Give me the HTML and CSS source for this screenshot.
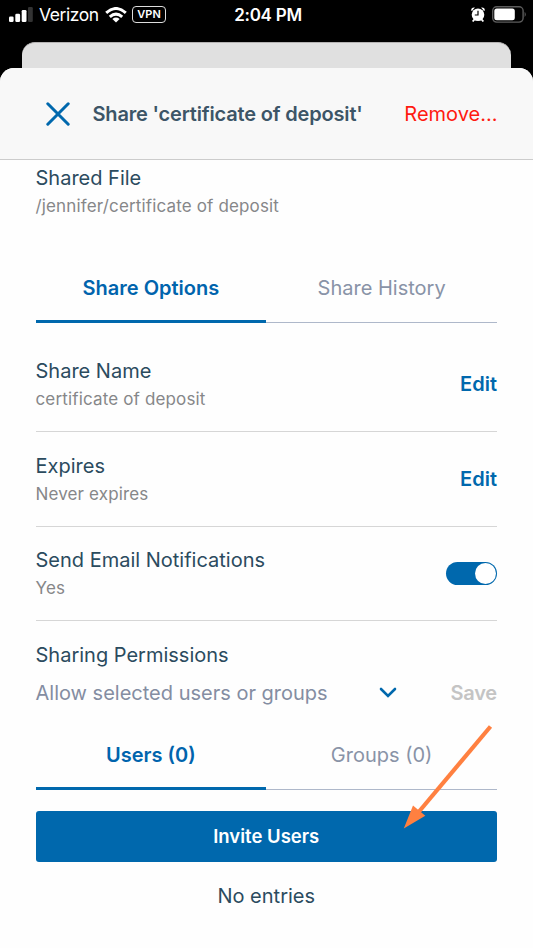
FILE: index.html
```html
<!DOCTYPE html>
<html lang="en">
<head>
<meta charset="utf-8">
<title>Share</title>
<link rel="stylesheet" href="styles.css">
</head>
<body>
<div class="statusbar">
  <div class="status-left">
    <svg class="signal" width="25" height="17" viewBox="0 0 25 17"><g fill="#fff"><rect x="0" y="10.5" width="4.6" height="5.5" rx="1.3"/><rect x="6.3" y="7.8" width="4.8" height="8.2" rx="1.3"/><rect x="12.7" y="4" width="4.8" height="12" rx="1.3"/></g><rect x="19" y="1" width="4.8" height="15" rx="1.3" fill="#333"/></svg>
    <span class="carrier">Verizon</span>
    <svg class="wifi" width="22" height="16" viewBox="0 0 22 16"><g fill="none" stroke="#fff" stroke-width="3"><path d="M1.2 5.8Q11-2.8 20.8 5.8"/><path d="M4.8 9.8Q11 4.4 17.2 9.8"/></g><path d="M7.4 12Q11 9.2 14.6 12L11 15.6Z" fill="#fff"/></svg>
    <span class="vpn">VPN</span>
  </div>
  <span class="clock">2:04 PM</span>
  <div class="status-right">
    <svg width="14" height="15" viewBox="0 0 14 15"><g fill="#fff"><circle cx="7" cy="7.8" r="6.3"/><path d="M.2 3.5Q0 .2 3.9.6L.9 4ZM13.8 3.5Q14 .2 10.1.6L13.1 4Z"/><path d="M2.5 12L4 13.3 2.3 15 1 14ZM11.5 12L10 13.3 11.7 15 13 14Z"/></g><path d="M7 3.8V8H3.8" fill="none" stroke="#000" stroke-width="1.2"/></svg>
    <svg width="35" height="17" viewBox="0 0 35 17"><rect x=".7" y=".7" width="30.4" height="15.4" rx="4" fill="none" stroke="#5c5c5c" stroke-width="1.4"/><rect x="2.3" y="2.5" width="20.5" height="11.7" rx="2.5" fill="#fff"/><path d="M32.6 5.7Q35 8.4 32.6 11Z" fill="#5c5c5c"/></svg>
  </div>
</div>
<div class="back-sheet"></div>
<main class="sheet">
  <header class="header">
    <svg class="close" width="24" height="24" viewBox="0 0 24 24"><path d="M1.8 1.8L22.2 22.2M22.2 1.8L1.8 22.2" stroke="#0068ad" stroke-width="3" stroke-linecap="round"/></svg>
    <h1 class="title">Share 'certificate of deposit'</h1>
    <span class="remove">Remove...</span>
  </header>
  <div class="content">
    <section class="file">
      <div class="label">Shared File</div>
      <div class="sub">/jennifer/certificate of deposit</div>
    </section>
    <nav class="tabs">
      <div class="tab active">Share Options</div>
      <div class="tab">Share History</div>
    </nav>
    <div class="rows">
      <div class="row">
        <div><div class="label">Share Name</div><div class="sub">certificate of deposit</div></div>
        <span class="edit">Edit</span>
      </div>
      <div class="row">
        <div><div class="label">Expires</div><div class="sub">Never expires</div></div>
        <span class="edit">Edit</span>
      </div>
      <div class="row">
        <div><div class="label">Send Email Notifications</div><div class="sub">Yes</div></div>
        <span class="toggle"><span class="knob"></span></span>
      </div>
    </div>
    <section class="permissions">
      <div class="label">Sharing Permissions</div>
      <div class="select-row">
        <span class="select">Allow selected users or groups</span>
        <svg class="chevron" width="18" height="12" viewBox="0 0 18 12"><path d="M2 2L9 9L16 2" fill="none" stroke="#0068ad" stroke-width="2.6" stroke-linecap="round"/></svg>
        <span class="save">Save</span>
      </div>
    </section>
    <nav class="tabs lower">
      <div class="tab active">Users (0)</div>
      <div class="tab">Groups (0)</div>
    </nav>
    <div class="invite">Invite Users</div>
    <div class="empty">No entries</div>
  </div>
  <svg class="arrow" width="94" height="108" viewBox="400 724 94 108"><path d="M490.5 726.5L417 814" stroke="#ff8040" stroke-width="4.2"/><path d="M403.8 828.5L413 805.5L425.3 815.8Z" fill="#ff8040"/></svg>
</main>
</body>
</html>
```
FILE: styles.css
```css
* { box-sizing: border-box; }
body {
  margin: 0;
  width: 533px;
  height: 948px;
  overflow: hidden;
  background: #000;
  color: #2b4b5e;
  font-family: Inter, "Liberation Sans", sans-serif;
  font-size: 20px;
  display: flex;
  flex-direction: column;
}
h1 { margin: 0; }
span, .label, .sub { white-space: nowrap; }

.statusbar {
  height: 42px;
  flex: none;
  display: grid;
  grid-template-columns: 1fr auto 1fr;
  align-items: start;
  padding: 0 6px 0 9px;
  color: #fff;
}
.status-left, .status-right { display: flex; align-items: center; height: 29px; }
.status-right { justify-content: flex-end; gap: 7px; height: 28px; }
.carrier { margin-left: 5px; font-size: 17.5px; letter-spacing: -0.45px; }
.wifi { margin-left: 6px; }
.vpn {
  margin-left: 5.5px;
  width: 34px;
  height: 17px;
  border: 1.5px solid #ddd;
  border-radius: 4px;
  font-size: 11px;
  font-weight: 600;
  line-height: 15px;
  text-align: center;
}
.clock { font-size: 17px; font-weight: 600; line-height: 30px; letter-spacing: -0.25px; }

.back-sheet {
  flex: none;
  height: 46px;
  margin: 0 22px -20px;
  background: #e0e0e0;
  border-top: 1px solid #b5b3b3;
  border-radius: 13px 13px 0 0;
}
.sheet {
  flex: 1;
  position: relative;
  background: #fefefe;
  border-radius: 14px 14px 0 0;
}
.header {
  height: 92px;
  padding: 0 36px 0 46px;
  display: flex;
  align-items: center;
  background: #f8f8f8;
  border-bottom: 1px solid #ccc;
  border-radius: 14px 14px 0 0;
}
.title {
  margin-left: 22.5px;
  font-size: 20px;
  font-weight: 600;
  letter-spacing: -0.17px;
  color: #3c5567;
  white-space: nowrap;
}
.remove { margin-left: auto; margin-right: -0.5px; color: #ff1a10; }

.content { padding: 4px 36px 0 35.5px; }
.label { line-height: 28px; }
.sub { font-size: 17px; line-height: 28px; letter-spacing: 0.15px; color: #868789; }
.tabs { display: flex; margin-top: 34px; }
.tab {
  flex: 1;
  height: 69px;
  line-height: 68px;
  text-align: center;
  color: #8993a7;
  border-bottom: 1px solid #aeb8ca;
}
.tab.active { color: #0064ad; font-weight: 600; border-bottom: 3px solid #0068ad; }
.rows { padding-top: 14.5px; }
.row {
  height: 94.5px;
  padding-top: 19.5px;
  display: flex;
  justify-content: space-between;
  border-bottom: 1px solid #d6d6d6;
}
.edit { line-height: 55.5px; font-weight: 600; color: #0068ad; }
.toggle {
  width: 51px;
  height: 23px;
  margin-top: 16px;
  padding: 1px;
  display: flex;
  justify-content: flex-end;
  border-radius: 12px;
  background: #0068ad;
}
.knob { width: 21px; height: 21px; border-radius: 50%; background: #fff; }
.permissions { padding-top: 19.5px; }
.select-row { display: flex; align-items: center; height: 28px; margin-top: 10px; }
.select { color: #848da2; width: 343px; }
.save { margin-left: auto; font-weight: 600; color: #c4c4c4; letter-spacing: -0.2px; }
.lower { margin-top: 14px; }
.invite {
  margin-top: 21.5px;
  height: 51px;
  line-height: 51px;
  border-radius: 3px;
  background: #0068ad;
  color: #fff;
  font-size: 18.5px;
  font-weight: 600;
  text-align: center;
}
.empty { margin-top: 19.5px; line-height: 28px; text-align: center; }
.arrow { position: absolute; left: 400px; top: 656px; }
```
